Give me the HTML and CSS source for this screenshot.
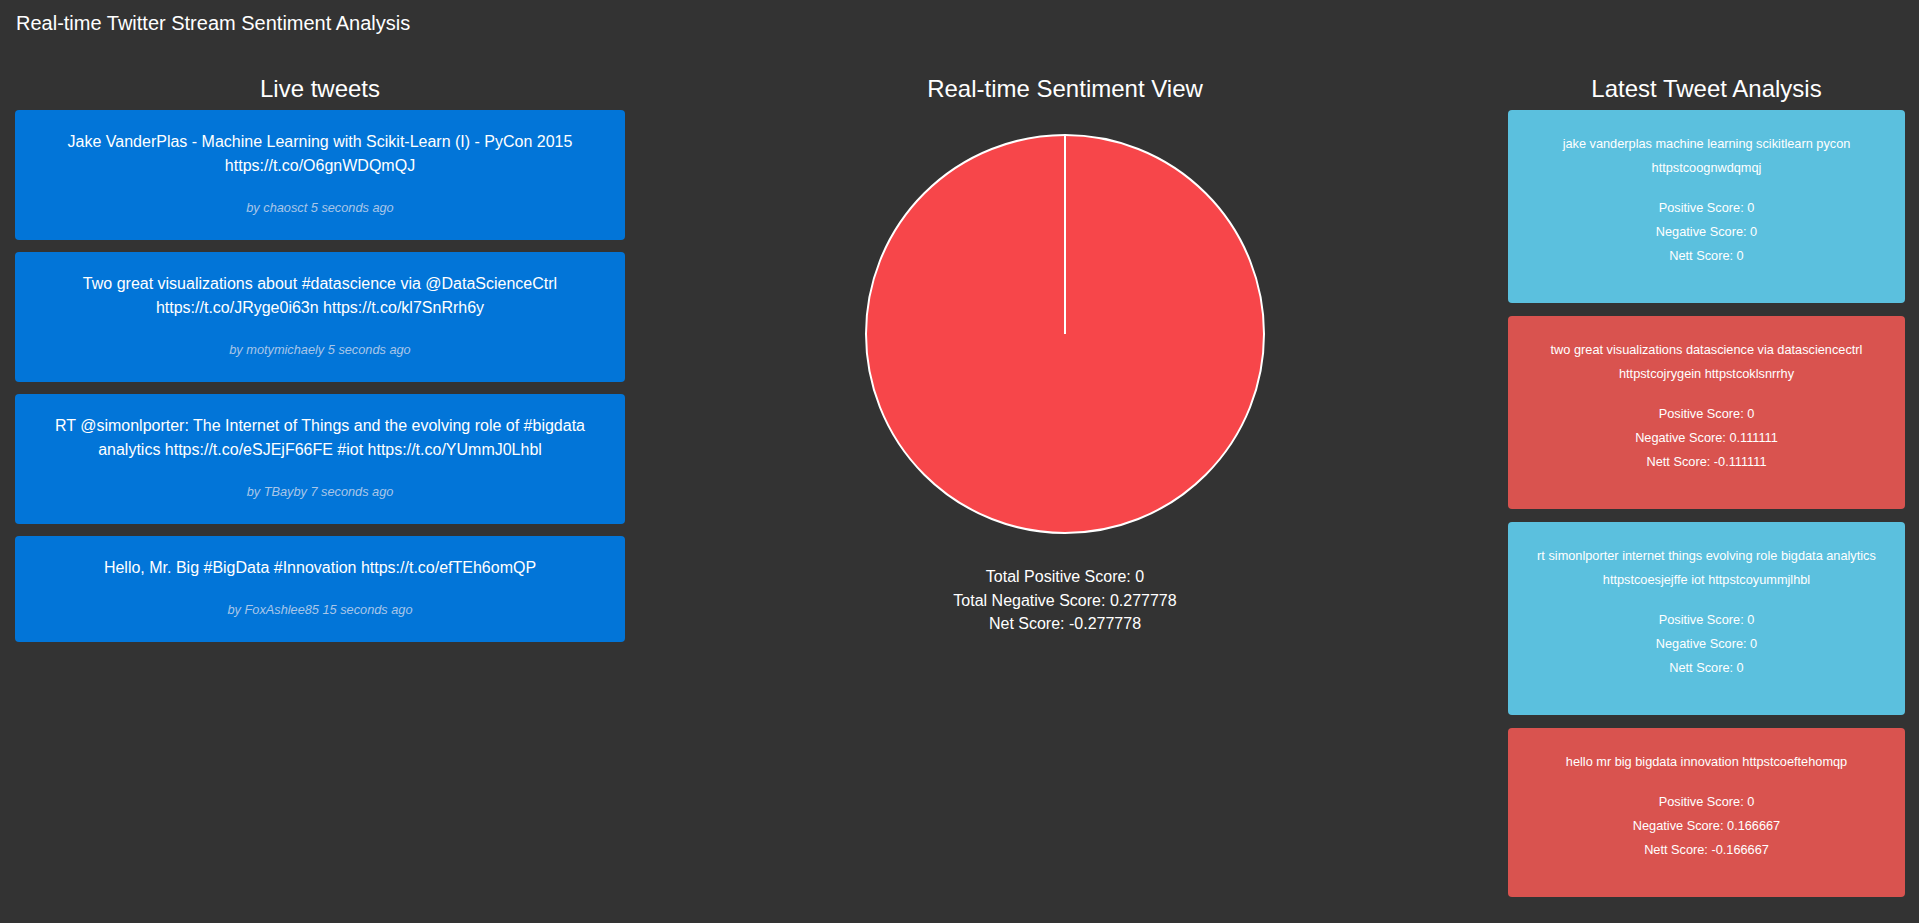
FILE: index.html
```html
<!DOCTYPE html>
<html lang="en">
<head>
<meta charset="utf-8">
<title>Real-time Twitter Stream Sentiment Analysis</title>
<link rel="stylesheet" href="styles.css">
</head>
<body>
<header class="topbar">
  <span class="brand">Real-time Twitter Stream Sentiment Analysis</span>
</header>
<main class="layout">
  <section class="col col-tweets">
    <h3 class="col-title">Live tweets</h3>
    <div class="tweet">
      <p class="tweet-text">Jake VanderPlas - Machine Learning with Scikit-Learn (I) - PyCon 2015 https://t.co/O6gnWDQmQJ</p>
      <p class="tweet-by">by chaosct 5 seconds ago</p>
    </div>
    <div class="tweet">
      <p class="tweet-text">Two great visualizations about #datascience via @DataScienceCtrl https://t.co/JRyge0i63n https://t.co/kl7SnRrh6y</p>
      <p class="tweet-by">by motymichaely 5 seconds ago</p>
    </div>
    <div class="tweet">
      <p class="tweet-text">RT @simonlporter: The Internet of Things and the evolving role of #bigdata analytics https://t.co/eSJEjF66FE #iot https://t.co/YUmmJ0Lhbl</p>
      <p class="tweet-by">by TBayby 7 seconds ago</p>
    </div>
    <div class="tweet">
      <p class="tweet-text">Hello, Mr. Big #BigData #Innovation https://t.co/efTEh6omQP</p>
      <p class="tweet-by">by FoxAshlee85 15 seconds ago</p>
    </div>
  </section>

  <section class="col col-chart">
    <h3 class="col-title">Real-time Sentiment View</h3>
    <svg class="pie" width="400" height="400" viewBox="0 0 400 400" aria-label="Sentiment pie chart">
      <circle cx="200" cy="200" r="199" fill="#f7464a" stroke="#ffffff" stroke-width="2"/>
      <line x1="200" y1="200" x2="200" y2="1" stroke="#ffffff" stroke-width="2"/>
    </svg>
    <div class="totals">
      <p>Total Positive Score: 0</p>
      <p>Total Negative Score: 0.277778</p>
      <p>Net Score: -0.277778</p>
    </div>
  </section>

  <section class="col col-analysis">
    <h3 class="col-title">Latest Tweet Analysis</h3>
    <div class="analysis neutral">
      <p class="analysis-text">jake vanderplas machine learning scikitlearn pycon httpstcoognwdqmqj</p>
      <p class="analysis-score">Positive Score: 0</p>
      <p class="analysis-score">Negative Score: 0</p>
      <p class="analysis-score">Nett Score: 0</p>
    </div>
    <div class="analysis negative">
      <p class="analysis-text">two great visualizations datascience via datasciencectrl httpstcojrygein httpstcoklsnrrhy</p>
      <p class="analysis-score">Positive Score: 0</p>
      <p class="analysis-score">Negative Score: 0.111111</p>
      <p class="analysis-score">Nett Score: -0.111111</p>
    </div>
    <div class="analysis neutral">
      <p class="analysis-text">rt simonlporter internet things evolving role bigdata analytics httpstcoesjejffe iot httpstcoyummjlhbl</p>
      <p class="analysis-score">Positive Score: 0</p>
      <p class="analysis-score">Negative Score: 0</p>
      <p class="analysis-score">Nett Score: 0</p>
    </div>
    <div class="analysis negative">
      <p class="analysis-text">hello mr big bigdata innovation httpstcoeftehomqp</p>
      <p class="analysis-score">Positive Score: 0</p>
      <p class="analysis-score">Negative Score: 0.166667</p>
      <p class="analysis-score">Nett Score: -0.166667</p>
    </div>
  </section>
</main>
</body>
</html>
```

FILE: styles.css
```css
* {
  box-sizing: border-box;
}

html,
body {
  margin: 0;
  padding: 0;
}

body {
  background: #333333;
  color: #ffffff;
  font-family: "Liberation Sans", Arial, Helvetica, sans-serif;
  min-height: 923px;
}

.topbar {
  height: 48px;
  padding: 11px 16px 13px;
}

.brand {
  display: block;
  font-size: 20px;
  line-height: 24px;
}

.layout {
  display: grid;
  grid-template-columns: 640px 850px 1fr;
}

.col {
  padding: 0 15px;
}

.col-analysis {
  padding: 0 14px 0 18px;
}

.col-title {
  margin: 27px 0 7px;
  font-size: 24px;
  line-height: 28px;
  font-weight: normal;
  text-align: center;
}

/* Live tweets */
.tweet {
  background: #0275d8;
  border-radius: 4px;
  padding: 20px 20px 23.5px;
  margin-bottom: 12.5px;
  text-align: center;
}

.tweet-text {
  margin: 0;
  font-size: 16px;
  line-height: 24px;
}

.tweet-by {
  margin: 21px 0 0;
  font-size: 12.75px;
  line-height: 17px;
  font-style: italic;
  color: #a9c6e8;
}

/* Chart column */
.col-chart {
  display: flex;
  flex-direction: column;
  align-items: center;
}

.pie {
  display: block;
  margin-top: 24px;
}

.totals {
  margin-top: 31px;
  font-size: 16px;
  line-height: 23.65px;
  text-align: center;
}

.totals p {
  margin: 0;
}

/* Analysis column */
.analysis {
  border-radius: 4px;
  padding: 22px 20px 35.33px;
  margin-bottom: 12.67px;
  text-align: center;
  font-size: 12.75px;
  line-height: 24px;
}

.analysis.neutral {
  background: #5bc0de;
}

.analysis.negative {
  background: #d9534f;
}

.analysis-text {
  margin: 0 0 16px;
}

.analysis-score {
  margin: 0;
}
```
